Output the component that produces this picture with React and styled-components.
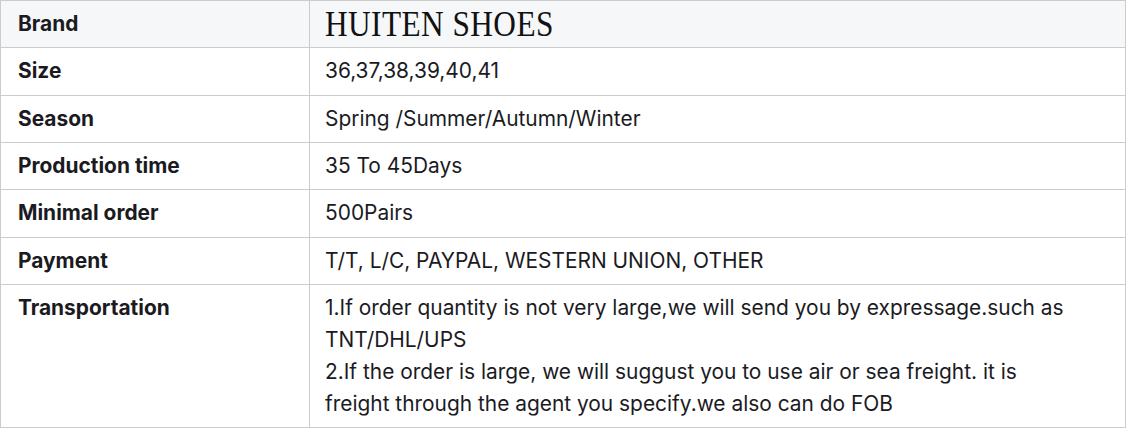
import React from "react";
import styled, { createGlobalStyle } from "styled-components";

const GlobalStyle = createGlobalStyle`
  body {
    margin: 0;
    background: #ffffff;
    font-family: Inter, "Noto Sans", sans-serif;
  }
`;

const SpecTable = styled.table`
  width: 1126px;
  border-collapse: collapse;
  table-layout: fixed;
  color: #1b1b1f;
  font-size: 20.9px;
`;

const Row = styled.tr`
  background: ${(props) => (props.shaded ? "#f6f7f9" : "#ffffff")};
`;

const Label = styled.td`
  width: 275px;
  padding: 7.17px 16px 7.17px 17px;
  border: 1px solid #cccccc;
  font-weight: 700;
  line-height: 32px;
  vertical-align: top;
`;

const Value = styled.td`
  padding: 7.17px 40px 7.17px 15px;
  border: 1px solid #cccccc;
  line-height: 32px;
  vertical-align: top;
`;

const BrandName = styled.span`
  display: inline-block;
  vertical-align: top;
  font-family: "Liberation Serif", serif;
  font-size: 36px;
  line-height: 32px;
  letter-spacing: 0.5px;
  color: #111111;
  transform: scaleX(0.87);
  transform-origin: left center;
`;

const specs = [
  ["Size", "36,37,38,39,40,41"],
  ["Season", "Spring /Summer/Autumn/Winter"],
  ["Production time", "35 To 45Days"],
  ["Minimal order", "500Pairs"],
  ["Payment", "T/T, L/C, PAYPAL, WESTERN UNION, OTHER"],
];

const App = () => {
  return (
    <>
      <GlobalStyle />
      <SpecTable>
        <tbody>
          <Row shaded>
            <Label>Brand</Label>
            <Value>
              <BrandName>HUITEN SHOES</BrandName>
            </Value>
          </Row>
          {specs.map(([label, value]) => (
            <Row key={label}>
              <Label>{label}</Label>
              <Value>{value}</Value>
            </Row>
          ))}
          <Row>
            <Label>Transportation</Label>
            <Value>
              1.If order quantity is not very large,we will send you by
              expressage.such as TNT/DHL/UPS
              <br />
              2.If the order is large, we will suggust you to use air or sea
              freight. it is freight through the agent you specify.we also can
              do FOB
            </Value>
          </Row>
        </tbody>
      </SpecTable>
    </>
  );
};

export default App;
